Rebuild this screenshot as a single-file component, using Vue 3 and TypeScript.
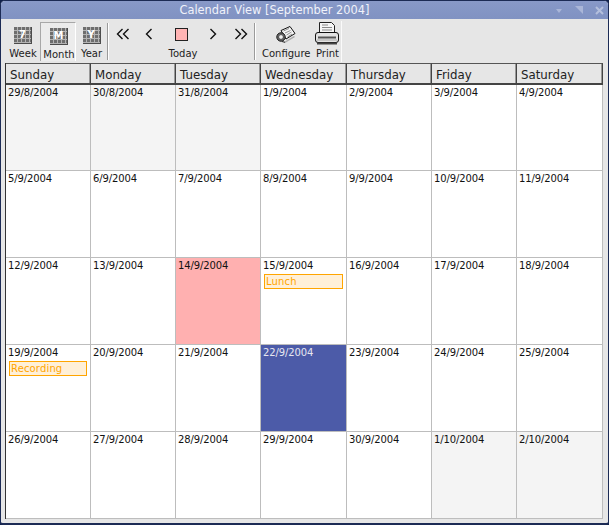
<script setup lang="ts">
interface Cell { label: string; kind?: string; event?: string }
const days = ['Sunday','Monday','Tuesday','Wednesday','Thursday','Friday','Saturday']
const cells: Cell[] = []
const push = (d: number, m: number, kind?: string, event?: string) => cells.push({ label: `${d}/${m}/2004`, kind, event })
for (const d of [29,30,31]) push(d, 8, 'other')
for (let d = 1; d <= 30; d++) {
  if (d === 14) push(d, 9, 'today')
  else if (d === 15) push(d, 9, undefined, 'Lunch')
  else if (d === 19) push(d, 9, undefined, 'Recording')
  else if (d === 22) push(d, 9, 'selected')
  else push(d, 9)
}
push(1, 10, 'other'); push(2, 10, 'other')
const views = [
  { label: 'Week', glyph: '7', active: false },
  { label: 'Month', glyph: 'M', active: true },
  { label: 'Year', glyph: 'Y', active: false },
]
</script>

<template>
  <div class="window">
    <div class="titlebar">
      <span class="title">Calendar View [September 2004]</span>
      <div class="wm">
        <svg class="wm-min" width="8" height="5" viewBox="0 0 8 5"><path d="M1 0h6L4 4z" fill="#aab6d8"/></svg>
        <svg width="8" height="8" viewBox="0 0 8 8"><path d="M0 0h8v8z" fill="#aab6d8"/></svg>
        <svg width="9" height="9" viewBox="0 0 9 9"><path d="M1 1l7 7M8 1L1 8" stroke="#b4bfdc" stroke-width="2"/></svg>
      </div>
    </div>
    <div class="body">
      <div class="toolbar">
        <div class="group views">
          <div v-for="v in views" :key="v.label" class="tool viewtool" :class="{ active: v.active }">
            <span class="calicon"><span class="calglyph">{{ v.glyph }}</span></span>
            <span class="tlabel">{{ v.label }}</span>
          </div>
        </div>
        <div class="sep"></div>
        <div class="group nav">
          <div class="navicons">
            <svg width="14" height="12" viewBox="0 0 14 12"><path d="M6.500 1L1.500 6l5 5M12.500 1l-5 5 5 5" fill="none" stroke="#111" stroke-width="1.400"/></svg>
            <svg class="g15" width="8" height="12" viewBox="0 0 8 12"><path d="M6.500 1L1.500 6l5 5" fill="none" stroke="#111" stroke-width="1.400"/></svg>
            <span class="stop"></span>
            <svg class="g21" width="8" height="12" viewBox="0 0 8 12"><path d="M1.500 1l5 5-5 5" fill="none" stroke="#111" stroke-width="1.400"/></svg>
            <svg class="g17" width="14" height="12" viewBox="0 0 14 12"><path d="M1.500 1l5 5-5 5M7.500 1l5 5-5 5" fill="none" stroke="#111" stroke-width="1.400"/></svg>
          </div>
          <span class="tlabel">Today</span>
        </div>
        <div class="sep"></div>
        <div class="group tail">
          <div class="tool cfg">
            <svg width="20" height="18" viewBox="0 0 20 18">
              <path d="M8 16l10-6 1 1-10 6z" fill="#aaa"/>
              <path d="M5 4.500L14 .5l5 7-9 5.500z" fill="#f6f6f6" stroke="#111"/>
              <path d="M7.500 5L13 2.500M9 7l5.500-2.500M10.500 9l5-3M11.500 11l4.500-3" stroke="#777" stroke-width=".8"/>
              <circle cx="5" cy="11" r="4.200" fill="#777" stroke="#111"/>
              <circle cx="5" cy="11" r="2.400" fill="#f2f2f2" stroke="#222" stroke-width=".7"/>
              <path d="M6 15.500l3 .8" stroke="#222"/>
            </svg>
            <span class="tlabel">Configure</span>
          </div>
          <div class="tool prn">
            <svg width="24" height="23" viewBox="0 0 24 23">
              <path d="M4.500 11.500V.5h12l3 3v8z" fill="#f6f6f6" stroke="#222"/>
              <path d="M7 3h6M7 5.500h10M7 8h10" stroke="#888"/>
              <rect x=".5" y="10.500" width="23" height="10" rx="2.500" fill="#e2e2e2" stroke="#111"/>
              <path d="M3 15.500h18" stroke="#555" stroke-width="2"/>
              <path d="M2 18h20" stroke="#aaa"/>
              <path d="M2 21.500h20" stroke="#444" stroke-width="2"/>
            </svg>
            <span class="tlabel">Print</span>
          </div>
        </div>
      </div>
      <div class="calendar">
        <div v-for="d in days" :key="d" class="head">{{ d }}</div>
        <div v-for="c in cells" :key="c.label" class="cell" :class="c.kind">
          <span class="date">{{ c.label }}</span>
          <div v-if="c.event" class="event">{{ c.event }}</div>
        </div>
      </div>
    </div>
  </div>
</template>

<style>
html, body { margin: 0; background: #10204a; }
</style>

<style scoped>
.window {
  width: 609px;
  height: 525px;
  box-sizing: border-box;
  display: flex;
  flex-direction: column;
  overflow: hidden;
  background: #e6e6e6;
  border-radius: 5px 5px 3px 3px;
  border: 1px solid #1c2b55;
  border-bottom-width: 2px;
  font-family: "DejaVu Sans", sans-serif;
  color: #111;
}
.titlebar {
  height: 18px;
  flex: none;
  background: linear-gradient(#8899c8, #8092c2);
  display: flex;
  align-items: center;
  justify-content: center;
  padding-right: 60px;
  box-sizing: border-box;
  position: relative;
}
.title { color: #f0f2fa; font-size: 11.4px; }
.wm {
  position: absolute;
  right: 4px;
  top: 5px;
  display: flex;
  gap: 12px;
  align-items: flex-start;
}
.wm-min { margin-top: 3px; }
.body {
  flex: 1;
  display: flex;
  flex-direction: column;
  padding: 2px 5px 0 4px;
  min-height: 0;
}
.toolbar {
  height: 41px;
  width: 336px;
  flex: none;
  display: flex;
  align-items: stretch;
  border-right: 1px solid #fafafa;
}
.group { display: flex; }
.views { width: 102px; }
.sep { width: 1px; margin: 2px 3px 2px 0; background: #9a9a9a; border-right: 1px solid #fff; }
.tool { display: flex; flex-direction: column; align-items: center; justify-content: flex-end; padding-bottom: 2px; box-sizing: border-box; }
.viewtool:nth-child(1) { width: 35px; padding-left: 1px; }
.viewtool:nth-child(2) { width: 36px; padding-left: 2px; }
.viewtool:nth-child(3) { width: 31px; }
.active {
  border: 1px solid #a8a8a8;
  border-right-color: #fff;
  border-bottom: 0;
  background: #ececec;
  padding-bottom: 0;
  margin: 1px 0 1px;
}
.calicon {
  width: 18px;
  height: 17px;
  margin-bottom: 3px;
  background:
    repeating-linear-gradient(90deg, transparent 0 3px, #b4b4b4 3px 4px),
    repeating-linear-gradient(180deg, #6e6e6e 0 3px, #b4b4b4 3px 4px),
    #7c7c7c;
  border-right: 1px solid #4c4c4c;
  border-bottom: 1px solid #4c4c4c;
  display: flex;
  align-items: center;
  justify-content: center;
  box-sizing: border-box;
}
.calglyph { color: #fff; font-size: 10px; font-weight: 700; line-height: 1; }
.tlabel { font-size: 10px; line-height: 13px; white-space: nowrap; color: #222; }
.nav {
  flex-direction: column;
  align-items: center;
  justify-content: space-between;
  width: 142px;
  padding-bottom: 2px;
  box-sizing: border-box;
}
.navicons {
  height: 27px;
  display: flex;
  align-items: center;
  align-self: flex-start;
  margin-left: 4px;
}
.g15 { margin-left: 15px; }
.g21 { margin-left: 21px; }
.g17 { margin-left: 17px; }
.stop { width: 13px; height: 13px; margin-left: 22px; background: #ffb4b4; border: 1px solid #222; box-sizing: border-box; }
.tail { padding-left: 3px; gap: 5px; }
.cfg svg { margin-bottom: 3px; }
.prn svg { margin-bottom: 2px; }
.calendar {
  flex: none;
  margin-top: 1px;
  display: grid;
  grid-template-columns: 85px 85px 85px 86px 85px 85px 86px;
  grid-template-rows: 22px 86px repeat(4, 87px);
  border-left: 1px solid #333;
  width: 598px;
  box-sizing: border-box;
  background: #fff;
}
.head {
  box-sizing: border-box;
  background: #e6e6e6;
  border-top: 1px solid #555;
  border-bottom: 2px solid #444;
  border-right: 1px solid #444;
  box-shadow: inset -1px 0 0 #999;
  font-size: 11.8px;
  line-height: 17px;
  padding: 3px 0 0 4px;
  color: #222;
}
.cell {
  box-sizing: border-box;
  border-right: 1px solid #bdbdbd;
  border-bottom: 1px solid #bdbdbd;
  padding: 1px 2px;
  background: #fff;
  overflow: hidden;
}
.date { display: block; font-size: 10px; line-height: 13px; letter-spacing: -0.1px; color: #111; }
.other { background: #f4f4f4; }
.today { background: #ffb0b0; }
.selected { background: #4c5ba8; }
.selected .date { color: #e6e6f0; }
.event {
  margin: 2px 1px 0 1px;
  height: 15px;
  box-sizing: border-box;
  border: 1px solid #ffa500;
  background: #fff0d8;
  color: #ffa500;
  font-size: 10px;
  line-height: 13px;
  padding-left: 1px;
  letter-spacing: 0.15px;
}
</style>
